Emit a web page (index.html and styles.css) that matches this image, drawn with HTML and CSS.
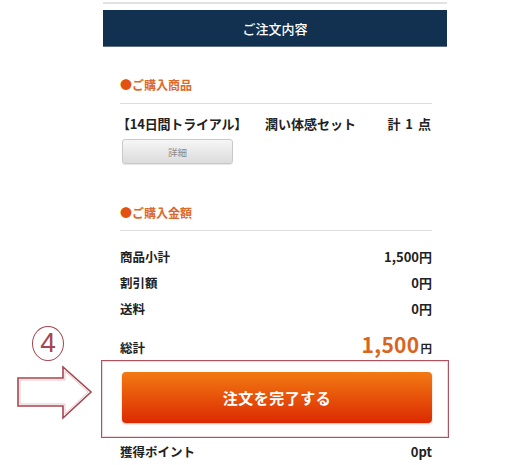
FILE: index.html
```html
<!DOCTYPE html>
<html lang="ja">
<head>
<meta charset="utf-8">
<link rel="stylesheet" href="styles.css">
</head>
<body>
<div class="page">
  <div class="col">
    <div class="topline"></div>
    <div class="header">ご注文内容</div>
    <div class="section">
      <div class="heading"><span class="dot">●</span>ご購入商品</div>
      <div class="product">
        <span><span class="pname">【14日間トライアル】</span>潤い体感セット</span>
        <span class="count">計 1 点</span>
      </div>
      <div class="detail">詳細</div>
    </div>
    <div class="section sec2">
      <div class="heading"><span class="dot">●</span>ご購入金額</div>
      <div class="row"><span>商品小計</span><span class="val">1,500円</span></div>
      <div class="row"><span>割引額</span><span class="val">0円</span></div>
      <div class="row"><span>送料</span><span class="val">0円</span></div>
      <div class="row total"><span>総計</span><span class="tval"><span class="big">1,500</span>円</span></div>
      <div class="submit">注文を完了する</div>
      <div class="row points"><span>獲得ポイント</span><span class="val">0pt</span></div>
    </div>
  </div>
  <div class="annot-circle">4</div>
  <svg class="annot-arrow" width="80" height="56" viewBox="0 0 80 56">
    <path d="M2 13 H47 V2 L75 27 L47 53 V41 H2 Z" fill="#fff" stroke="#a5454f" stroke-width="1.6" stroke-linejoin="miter"/>
    <path d="M4 15 H49 V6 L72 27 L49 49 V39 H4 Z" fill="none" stroke="#e8c4c8" stroke-width="1"/>
  </svg>
  <div class="annot-box"></div>
</div>
</body>
</html>
```
FILE: styles.css
```css
* { box-sizing: border-box; }
html, body { margin: 0; padding: 0; background: #fff; }
body {
  font-family: "Noto Sans CJK JP", "Noto Sans", sans-serif;
  color: #222;
  width: 520px;
  height: 465px;
  overflow: hidden;
}
.page { position: relative; width: 520px; height: 465px; }
.col { margin-left: 103px; width: 344px; padding-top: 2px; }
.topline { height: 2px; background: #e2e2e2; }
.header {
  margin-top: 6px;
  height: 37px;
  background: #12304f;
  border-bottom: 1px solid #5d6f83;
  color: #fff;
  font-size: 13px;
  font-weight: 500;
  display: flex;
  align-items: center;
  justify-content: center;
}
.section { padding: 0 15px 0 17px; }
.heading {
  margin-top: 28px;
  line-height: 20px;
  padding-bottom: 8px;
  border-bottom: 1px solid #dcdcdc;
  color: #dd6a2a;
  font-size: 12px;
  font-weight: 700;
}
.dot { color: #e2510f; }
.product {
  margin-top: 10px;
  line-height: 20px;
  display: flex;
  justify-content: space-between;
  font-size: 13px;
  font-weight: 700;
  color: #222;
}
.pname { margin-left: -3px; margin-right: 18px; letter-spacing: -0.2px; }
.count { letter-spacing: 1px; }
.detail {
  margin-top: 5px;
  margin-left: 2px;
  width: 111px;
  height: 25px;
  border: 1px solid #c9c9c9;
  border-radius: 3px;
  background: linear-gradient(#f6f6f6, #dcdcdc);
  box-shadow: 0 1px 1px rgba(0,0,0,0.1);
  color: #8a8a8a;
  font-size: 9.5px;
  display: flex;
  align-items: center;
  justify-content: center;
}
.sec2 .heading { margin-top: 39px; padding-bottom: 7px; }
.sec2 .heading + .row { margin-top: 12px; }
.row {
  height: 26px;
  display: flex;
  align-items: center;
  justify-content: space-between;
  font-size: 12.5px;
  font-weight: 700;
  color: #222;
}
.val { font-size: 13px; }
.total {
  margin-top: 2px;
  margin-bottom: 19px;
  height: 30px;
  align-items: baseline;
  padding-top: 6px;
}
.tval { font-size: 11.5px; }
.total .big {
  color: #d8661f;
  font-size: 21px;
  font-weight: 700;
  letter-spacing: 0.3px;
  margin-right: 1px;
}
.submit {
  margin-top: 10px;
  margin-left: 2px;
  height: 51px;
  border-radius: 4px;
  background: linear-gradient(#f27a12, #dc2a02);
  box-shadow: 0 1px 2px rgba(120,40,0,0.35);
  color: #fff;
  font-size: 15px;
  font-weight: 700;
  letter-spacing: 0.5px;
  display: flex;
  align-items: center;
  justify-content: center;
}
.points { margin-top: 15px; }
.annot-circle {
  position: absolute;
  left: 32px;
  top: 326px;
  width: 32px;
  height: 35px;
  border: 1.6px solid #a5454f;
  border-radius: 50%;
  color: #a5454f;
  font-family: "Liberation Sans", sans-serif;
  font-size: 28px;
  font-weight: 400;
  line-height: 32px;
  text-align: center;
}
.annot-arrow { position: absolute; left: 16px; top: 365px; }
.annot-box {
  position: absolute;
  left: 101px;
  top: 360px;
  width: 348px;
  height: 78px;
  border: 1.6px solid #ad5360;
  box-shadow: inset 0 0 0 1px #f0d8dc;
}
```
